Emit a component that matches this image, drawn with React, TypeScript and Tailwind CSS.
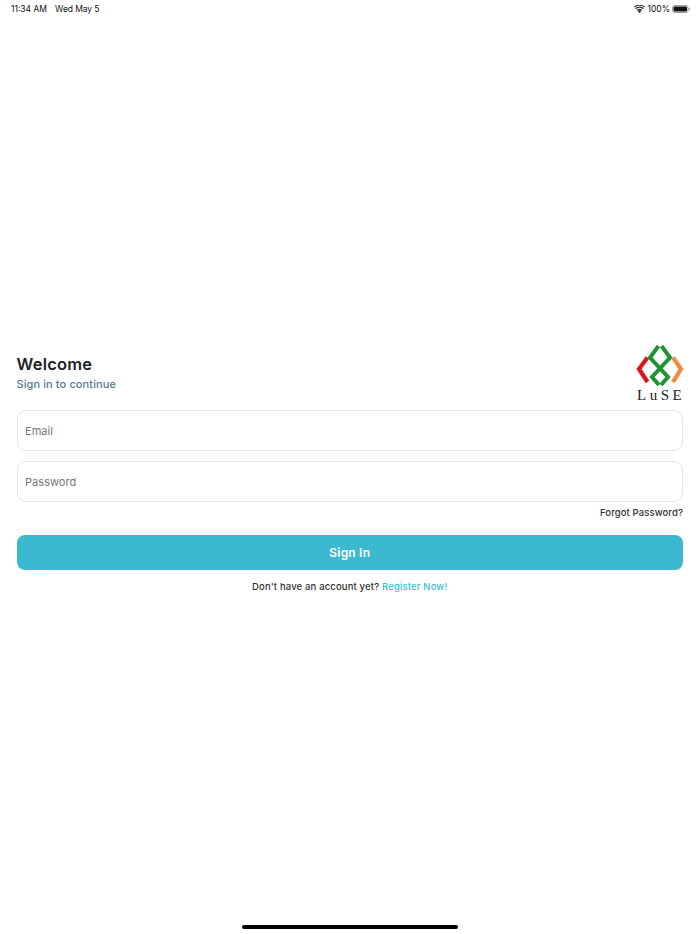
import React from "react";

function Logo() {
  return (
    <div className="flex flex-col items-start w-[48px]">
      <svg width="48" height="41" viewBox="0 0 48 41" className="block ml-[1px]">
        <polyline points="11.5,12.5 3,24 11.5,37" fill="none" stroke="#e0141c" strokeWidth="4.2" />
        <polyline points="37,12.5 45,24 37,37" fill="none" stroke="#f58a3c" strokeWidth="4.2" />
        <polyline points="22.5,1 14,12.5 32,32 25,40" fill="none" stroke="#1f9434" strokeWidth="4" />
        <polyline points="25.5,1 34,12.5 16,32 23,40" fill="none" stroke="#1f9434" strokeWidth="4" />
      </svg>
      <span className="ml-[2px] mt-[1px] text-[15px] leading-[16px] tracking-[3.5px] text-[#222] whitespace-nowrap font-['Liberation_Serif',serif]">LuSE</span>
    </div>
  );
}

function Field({ label }: { label: string }) {
  return (
    <div className="h-[41px] rounded-[9px] border border-[#e6e6e6] bg-white px-[7.5px] pt-[1px] flex items-center text-[11px] tracking-[0.05px] text-[#777]">
      {label}
    </div>
  );
}

export default function App() {
  return (
    <div className="relative h-[934px] w-[700px] bg-white overflow-hidden flex flex-col font-['Inter',sans-serif]">
      <div className="h-[17px] pt-[1px] pl-[11px] pr-[10px] flex items-center justify-between text-[8.5px] text-[#111]">
        <div className="flex gap-[8px]">
          <span>11:34 AM</span>
          <span className="tracking-[-0.1px]">Wed May 5</span>
        </div>
        <div className="flex items-center gap-[2px]">
          <svg width="11" height="8" viewBox="0 0 11 8">
            <path d="M5.5 8 3.8 6a2.5 2.5 0 0 1 3.4 0Z" fill="#111" />
            <path d="M2.8 4.9a4 4 0 0 1 5.4 0l-.7.8a3 3 0 0 0-4 0Z" fill="#111" />
            <path d="M1.2 3.2a6.4 6.4 0 0 1 8.6 0l-.8.9a5.2 5.2 0 0 0-7 0Z" fill="#111" />
            <path d="M0 1.8a8.2 8.2 0 0 1 11 0l-.6.7a7.2 7.2 0 0 0-9.8 0Z" fill="#111" />
          </svg>
          <span>100%</span>
          <svg width="18" height="8" viewBox="0 0 18 8">
            <rect x="0.5" y="0.5" width="15.5" height="7" rx="2" fill="#fff" stroke="#999" />
            <rect x="1.5" y="1.5" width="13.5" height="5" rx="1" fill="#111" />
            <rect x="16.6" y="2.7" width="1.2" height="2.6" rx="0.6" fill="#999" />
          </svg>
        </div>
      </div>

      <div className="mt-[328px] pl-[16.5px] pr-[17px] flex flex-col">
        <div className="flex items-end justify-between">
          <div className="pb-[10px]">
            <div className="text-[16.5px] leading-[22px] mb-[1px] font-semibold tracking-[0.2px] text-[#222]">Welcome</div>
            <div className="mt-[-1px] text-[11px] leading-[18px] font-medium tracking-[0.1px] text-[#557a92]">Sign in to continue</div>
          </div>
          <Logo />
        </div>
        <div className="mt-[7px] flex flex-col gap-[10px]">
          <Field label="Email" />
          <Field label="Password" />
        </div>
        <div className="mt-[4px] text-right text-[9.5px] leading-[14px] font-medium tracking-[0.1px] text-[#333]">Forgot Password?</div>
        <button className="mt-[15px] h-[35px] rounded-[8px] bg-[#3cb9d0] text-white text-[12px] font-semibold tracking-[0.2px]">Sign In</button>
        <div className="mt-[10px] text-center text-[9.5px] leading-[14px] font-medium tracking-[0.15px] text-[#333]">
          Don't have an account yet? <span className="text-[#42bcd3]">Register Now!</span>
        </div>
      </div>

      <div className="absolute left-[242px] top-[925px] h-[4px] w-[216px] rounded-full bg-black" />
    </div>
  );
}
